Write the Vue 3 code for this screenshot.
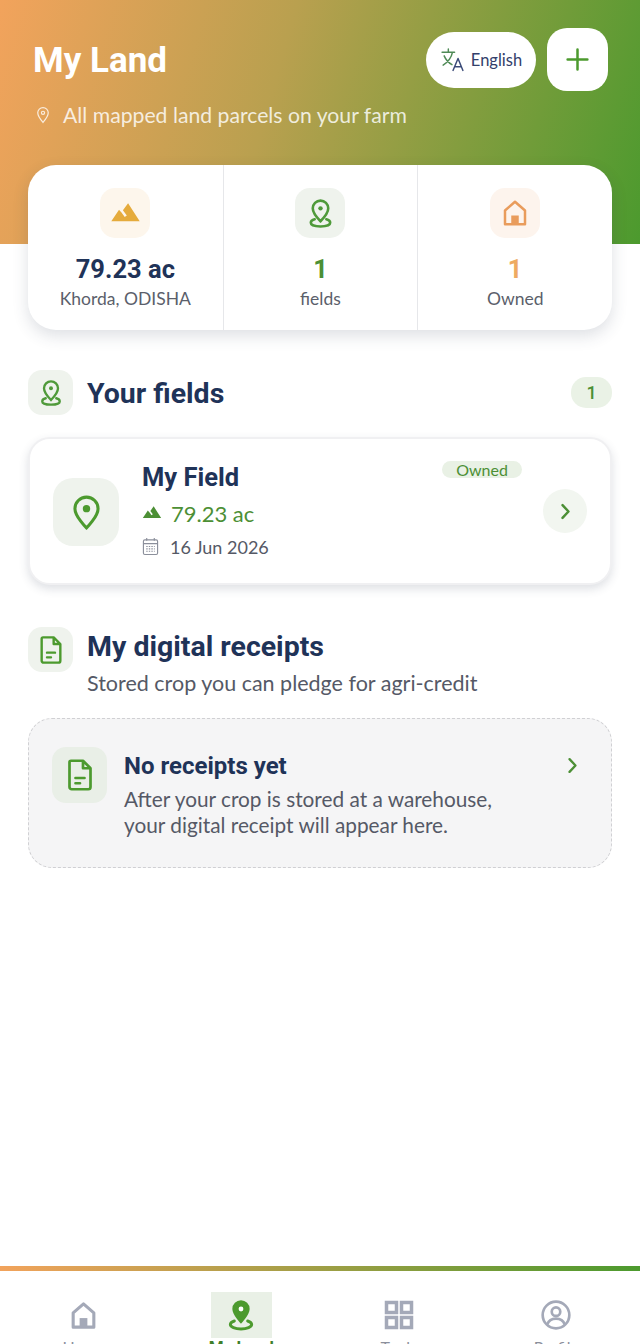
<template>
  <div class="page">
    <header class="hero">
      <div class="hero-top">
        <h1 class="hero-title">My Land</h1>
        <div class="hero-actions">
          <button class="lang-btn">
            <svg class="lang-icon" viewBox="0 0 24 24" fill="none" stroke-width="1.400" stroke-linecap="round" stroke-linejoin="round">
              <path stroke="#4f8a56" d="M2 5h12M8 2v3M4 8.500c1.500 3.600 4 6.400 7.500 8.500M12 5c-1 5-4 9.300-9 12.500" />
              <path stroke="#3a4a78" d="M12.500 22.500 17.300 11l4.700 11.500M14 19h6.600" />
            </svg>
            <span>English</span>
          </button>
          <button class="add-btn">
            <svg viewBox="0 0 24 24" width="25" height="25" fill="none" stroke="#4c9a2e" stroke-width="2.400" stroke-linecap="round">
              <path d="M12 2.500v19M2.500 12h19" />
            </svg>
          </button>
        </div>
      </div>
      <p class="hero-sub">
        <svg viewBox="0 0 16 20" width="14" height="18" fill="none" stroke="#fff" stroke-opacity=".8" stroke-width="1.400">
          <path d="M8 1.500a6 6 0 0 0-6 6c0 4 6 11 6 11s6-7 6-11a6 6 0 0 0-6-6z" />
          <circle cx="8" cy="7.500" r="1.800" />
        </svg>
        <span>All mapped land parcels on your farm</span>
      </p>
    </header>

    <main class="content">
      <section class="stats">
        <div v-for="s in stats" :key="s.label" class="stat">
          <div class="tile stat-tile" :style="{ background: s.tint }">
            <svg v-if="s.icon === 'terrain'" viewBox="0 0 24 24" width="31" height="31" fill="#e5ab3c">
              <path :d="terrainPath" />
            </svg>
            <svg v-else-if="s.icon === 'pin'" viewBox="0 0 24 24" width="31" height="31" fill="none" stroke="#4f9a3a" stroke-width="2">
              <path :d="pinPath" />
              <circle cx="12" cy="8" r="1.700" fill="#4f9a3a" stroke="none" />
              <path :d="ringPath" stroke-linecap="round" />
            </svg>
            <svg v-else viewBox="0 0 24 24" width="30" height="30" fill="none" stroke="#e99c5c" stroke-width="2">
              <path d="M4 21V10l8-7 8 7v11z" stroke-linejoin="round" />
              <rect x="9" y="14" width="6" height="7" fill="#e99c5c" stroke="none" />
            </svg>
          </div>
          <div class="stat-value" :style="{ color: s.color }">{{ s.value }}</div>
          <div class="stat-label">{{ s.label }}</div>
        </div>
      </section>

      <div class="section-head fields-head">
        <div class="tile small-tile">
          <svg viewBox="0 0 24 24" width="28" height="28" fill="none" stroke="#4f9a3a" stroke-width="2">
            <path :d="pinPath" />
            <circle cx="12" cy="8" r="1.700" fill="#4f9a3a" stroke="none" />
            <path :d="ringPath" stroke-linecap="round" />
          </svg>
        </div>
        <h2 class="section-title">Your fields</h2>
        <span class="count">1</span>
      </div>

      <article class="field-card">
        <div class="tile field-tile">
          <svg viewBox="0 0 24 24" width="37" height="37" fill="none" stroke="#4c9a2e" stroke-width="2">
            <path d="M12 2a7.500 7.500 0 0 0-7.500 7.500C4.500 14.500 12 22 12 22s7.500-7.500 7.500-12.500A7.500 7.500 0 0 0 12 2z" />
            <circle cx="12" cy="9.500" r="2.400" fill="#4c9a2e" stroke="none" />
          </svg>
        </div>
        <div class="field-info">
          <div class="field-name">My Field</div>
          <div class="field-row field-area">
            <svg viewBox="0 0 24 24" width="20" height="20" fill="#4c8f35"><path :d="terrainPath" /></svg>
            <span>79.23 ac</span>
          </div>
          <div class="field-row field-date">
            <svg viewBox="0 0 18 20" width="17" height="19" fill="none" stroke="#8b8f9b" stroke-width="1.200">
              <rect x="1.500" y="3" width="15" height="15.500" rx="1.500" />
              <path d="M1.500 7h15M5 1v3M13 1v3" />
              <path d="M4.500 10h9M4.500 12.500h9M4.500 15h9" stroke-dasharray="1.500 1.200" />
            </svg>
            <span>16 Jun 2026</span>
          </div>
        </div>
        <span class="owned">Owned</span>
        <div class="chevron-circle">
          <svg viewBox="0 0 12 20" width="11" height="17" fill="none" stroke="#4c8f35" stroke-width="2.900" stroke-linecap="round" stroke-linejoin="round">
            <path d="M2.500 2.500 9.500 10l-7 7.500" />
          </svg>
        </div>
      </article>

      <div class="section-head receipts-head">
        <div class="tile small-tile">
          <svg viewBox="0 0 24 24" width="32" height="32" fill="none" stroke="#4c9a2e" stroke-width="1.800" stroke-linejoin="round">
            <path :d="filePath" />
            <path d="M9 14h6M9 17.500h3" stroke-linecap="round" />
          </svg>
        </div>
        <div>
          <h2 class="section-title">My digital receipts</h2>
          <p class="section-sub">Stored crop you can pledge for agri-credit</p>
        </div>
      </div>

      <article class="empty-card">
        <div class="tile empty-tile">
          <svg viewBox="0 0 24 24" width="36" height="36" fill="none" stroke="#4c9a2e" stroke-width="1.800" stroke-linejoin="round">
            <path :d="filePath" />
            <path d="M9 14h6M9 17.500h3" stroke-linecap="round" />
          </svg>
        </div>
        <div class="empty-text">
          <div class="empty-title">No receipts yet</div>
          <p class="empty-body">After your crop is stored at a warehouse,<br />your digital receipt will appear here.</p>
        </div>
        <svg class="empty-chevron" viewBox="0 0 12 20" width="11" height="17" fill="none" stroke="#4c8f35" stroke-width="2.700" stroke-linecap="round" stroke-linejoin="round">
          <path d="M2.500 2.500 9.500 10l-7 7.500" />
        </svg>
      </article>
    </main>

    <nav class="nav">
      <div v-for="item in navItems" :key="item.label" class="nav-item" :class="{ active: item.active }">
        <div class="nav-icon">
          <svg v-if="item.label === 'Home'" viewBox="0 0 24 24" width="31" height="31" fill="none" stroke="#a4a9b8" stroke-width="2.400">
            <path d="M4 21V10l8-7 8 7v11z" stroke-linejoin="round" />
            <rect x="9" y="14" width="6" height="7" fill="#a4a9b8" stroke="none" />
          </svg>
          <svg v-else-if="item.label === 'My Land'" viewBox="0 0 24 24" width="32" height="32" fill="none">
            <path d="M12 1a6.500 6.500 0 0 0-6.500 6.500C5.500 12 12 18.500 12 18.500S18.500 12 18.500 7.500A6.500 6.500 0 0 0 12 1z" fill="#4c9a2e" />
            <circle cx="12" cy="7.500" r="1.800" fill="#fff" />
            <path d="M7 16.500c-2 .6-3 1.500-3 2.700C4 21 7.500 22.500 12 22.500s8-1.500 8-3.300c0-1.200-1-2.100-3-2.700" stroke="#4c9a2e" stroke-width="2.200" stroke-linecap="round" />
          </svg>
          <svg v-else-if="item.label === 'Tools'" viewBox="0 0 24 24" width="30" height="30" fill="none" stroke="#a4a9b8" stroke-width="2.800">
            <rect x="2" y="2" width="8" height="8" />
            <rect x="14" y="2" width="8" height="8" />
            <rect x="2" y="14" width="8" height="8" />
            <rect x="14" y="14" width="8" height="8" />
          </svg>
          <svg v-else viewBox="0 0 24 24" width="32" height="32" fill="none" stroke="#a4a9b8" stroke-width="2">
            <circle cx="12" cy="12" r="10" />
            <circle cx="12" cy="9.500" r="3.200" />
            <path d="M5.500 19c1-3 3.500-4.300 6.500-4.300s5.500 1.300 6.500 4.300" />
          </svg>
        </div>
        <div class="nav-label">{{ item.label }}</div>
      </div>
    </nav>
  </div>
</template>

<script setup>
const terrainPath = 'M14 4l-4 5.500 3 4-1.600 1.200C9.810 12 7 9 7 9l-6 9h22L14 4z'
const pinPath = 'M12 2a6 6 0 0 0-6 6c0 4 6 10 6 10s6-6 6-10a6 6 0 0 0-6-6z'
const ringPath = 'M7.500 16.500C5.500 17 4.500 18 4.500 19.200c0 1.700 3.300 2.800 7.500 2.800s7.500-1.100 7.500-2.800c0-1.200-1-2.200-3-2.700'
const filePath = 'M6 2.500h8l5 5V20a1.500 1.500 0 0 1-1.500 1.500h-11A1.500 1.500 0 0 1 5 20V3.500a1 1 0 0 1 1-1zM14 2.500v5h5'

const stats = [
  { icon: 'terrain', value: '79.23 ac', label: 'Khorda, ODISHA', color: '#1f3358', tint: '#fdf6ec' },
  { icon: 'pin', value: '1', label: 'fields', color: '#4c8f35', tint: '#eff3ed' },
  { icon: 'house', value: '1', label: 'Owned', color: '#eeaa62', tint: '#fdf4ed' }
]

const navItems = [
  { label: 'Home' },
  { label: 'My Land', active: true },
  { label: 'Tools' },
  { label: 'Profile' }
]
</script>

<style scoped>
.page {
  width: 640px;
  height: 1344px;
  overflow: hidden;
  display: flex;
  flex-direction: column;
  background: #fff;
  font-family: "Lato", "Open Sans", sans-serif;
}

.hero {
  height: 244px;
  flex: none;
  box-sizing: border-box;
  padding: 28px 32px 0 33px;
  background: linear-gradient(106deg, #f2a35c 0%, #b9a04f 42%, #4c9a2e 100%);
}
.hero-top {
  display: flex;
  justify-content: space-between;
  align-items: center;
}
.hero-title {
  margin: 2px 0 0;
  font: 700 35px/61px "Roboto", sans-serif;
  color: #fff;
}
.hero-actions {
  display: flex;
  align-items: center;
  gap: 11px;
}
.lang-btn {
  width: 110px;
  height: 56px;
  border: 0;
  border-radius: 28px;
  background: #fff;
  display: flex;
  align-items: center;
  justify-content: center;
  gap: 6px;
  padding: 0;
  font: 400 16.500px "Lato", sans-serif;
  color: #33406b;
}
.lang-icon {
  width: 25px;
  height: 25px;
}
.add-btn {
  width: 61px;
  height: 63px;
  border: 0;
  border-radius: 20px;
  background: #fff;
  display: flex;
  align-items: center;
  justify-content: center;
  padding: 0;
}
.hero-sub {
  margin: 10px 0 0 3px;
  display: flex;
  align-items: center;
  gap: 13px;
  font-size: 21.200px;
  line-height: 28px;
  color: rgba(255, 255, 255, 0.82);
}

.content {
  flex: 1;
  padding: 0 28px;
}
.tile {
  display: flex;
  align-items: center;
  justify-content: center;
  flex: none;
  background: #eff3ed;
}

.stats {
  margin-top: -79px;
  height: 165px;
  position: relative;
  display: grid;
  grid-template-columns: repeat(3, 1fr);
  background: #fff;
  border-radius: 28px;
  box-shadow: 0 6px 16px rgba(50, 60, 90, 0.16);
}
.stat {
  display: flex;
  flex-direction: column;
  align-items: center;
  padding-top: 23px;
  border-left: 1px solid #e6e7ea;
}
.stat:first-child {
  border-left: 0;
}
.stat-tile {
  width: 50px;
  height: 50px;
  border-radius: 15px;
}
.stat-value {
  margin-top: 15px;
  font: 700 25.500px/32px "Roboto", sans-serif;
}
.stat-label {
  margin-top: 1px;
  font-size: 17.500px;
  line-height: 26px;
  color: #5b5f6b;
}

.section-head {
  display: flex;
  gap: 14px;
}
.fields-head {
  margin-top: 40px;
  align-items: center;
}
.fields-head .section-title {
  padding-top: 2px;
}
.small-tile {
  width: 45px;
  height: 45px;
  border-radius: 14px;
}
.section-title {
  margin: 0;
  font: 700 28.500px/38px "Roboto", sans-serif;
  color: #1f3358;
}
.count {
  margin-left: auto;
  width: 41px;
  height: 31px;
  border-radius: 15px;
  background: #eaf2e6;
  display: flex;
  align-items: center;
  justify-content: center;
  font: 500 18px "Roboto", sans-serif;
  color: #4c8f35;
}

.field-card {
  margin-top: 22px;
  height: 148px;
  box-sizing: border-box;
  padding: 0 23px;
  display: flex;
  align-items: center;
  position: relative;
  background: #fff;
  border: 2px solid #f0f0f2;
  border-radius: 22px;
  box-shadow: 0 4px 10px rgba(50, 60, 90, 0.16);
}
.field-tile {
  width: 66px;
  height: 68px;
  border-radius: 20px;
  margin-top: 2px;
}
.field-info {
  margin-left: 23px;
  flex: 1;
}
.field-name {
  font: 700 25.500px/34px "Roboto", sans-serif;
  color: #1f3358;
}
.field-row {
  display: flex;
  align-items: center;
}
.field-area {
  margin-top: 3px;
  gap: 9px;
  font-size: 22px;
  line-height: 33px;
  color: #4c8f35;
}
.field-date {
  margin-top: 1px;
  gap: 11px;
  font-size: 18px;
  line-height: 32px;
  color: #555966;
}
.owned {
  position: absolute;
  top: 22px;
  left: 412px;
  width: 80px;
  height: 17px;
  border-radius: 9px;
  background: #e9f1e5;
  text-align: center;
  font-size: 16px;
  line-height: 17px;
  color: #4c8f35;
}
.chevron-circle {
  width: 44px;
  height: 44px;
  border-radius: 50%;
  background: #f2f6f0;
  display: flex;
  align-items: center;
  justify-content: center;
}

.receipts-head {
  margin-top: 42px;
  align-items: flex-start;
}
.receipts-head .section-title {
  padding-top: 1px;
}
.section-sub {
  margin: 3px 0 0;
  font-size: 21.500px;
  line-height: 28px;
  color: #555966;
}

.empty-card {
  margin-top: 21px;
  height: 150px;
  box-sizing: border-box;
  padding: 28px 23px;
  display: flex;
  background: #f5f5f6;
  border: 1.500px dashed #d0d0d3;
  border-radius: 24px;
}
.empty-tile {
  width: 55px;
  height: 56px;
  border-radius: 14px;
  background: #e9efe7;
}
.empty-text {
  margin-left: 17px;
  padding-top: 2px;
  flex: 1;
}
.empty-title {
  font: 700 24px/34px "Roboto", sans-serif;
  color: #1f3358;
}
.empty-body {
  margin: 3px 0 0;
  font-size: 20.800px;
  line-height: 26px;
  color: #555966;
}
.empty-chevron {
  margin: 10px 10px 0 0;
}

.nav {
  flex: none;
  height: 78px;
  box-sizing: border-box;
  overflow: hidden;
  padding: 21px 5px 0;
  display: grid;
  grid-template-columns: repeat(4, 1fr);
  position: relative;
  border-top: 5px solid;
  border-image: linear-gradient(90deg, #f2a35c, #4c9a2e) 1;
}
.nav-item {
  display: flex;
  flex-direction: column;
  align-items: center;
  text-align: center;
  color: #8b8f9b;
  font-size: 16px;
  line-height: 18px;
}
.nav-icon {
  width: 61px;
  height: 46px;
  display: flex;
  align-items: center;
  justify-content: center;
}
.nav-item.active .nav-icon {
  background: #e9f0e6;
}
.nav-item.active .nav-label {
  font: 700 17px/18px "Roboto", sans-serif;
  color: #3f7f2a;
}
</style>

<style>
body {
  background: #fff;
}
</style>
